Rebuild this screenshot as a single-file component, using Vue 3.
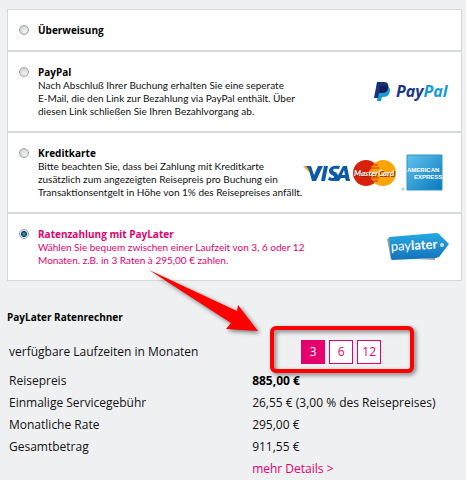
<script setup>
import { ref } from 'vue'

const methods = [
  { id: 'transfer', title: 'Überweisung', lines: [] },
  {
    id: 'paypal',
    title: 'PayPal',
    lines: [
      'Nach Abschluß Ihrer Buchung erhalten Sie eine seperate',
      'E-Mail, die den Link zur Bezahlung via PayPal enthält. Über',
      'diesen Link schließen Sie Ihren Bezahlvorgang ab.'
    ]
  },
  {
    id: 'card',
    title: 'Kreditkarte',
    lines: [
      'Bitte beachten Sie, dass bei Zahlung mit Kreditkarte',
      'zusätzlich zum angezeigten Reisepreis pro Buchung ein',
      'Transaktionsentgelt in Höhe von 1% des Reisepreises anfällt.'
    ]
  },
  {
    id: 'paylater',
    title: 'Ratenzahlung mit PayLater',
    lines: [
      'Wählen Sie bequem zwischen einer Laufzeit von 3, 6 oder 12',
      'Monaten. z.B. in 3 Raten à 295,00 € zahlen.'
    ]
  }
]

const rows = [
  { label: 'Reisepreis', value: '885,00 €', bold: true },
  { label: 'Einmalige Servicegebühr', value: '26,55 € (3,00 % des Reisepreises)' },
  { label: 'Monatliche Rate', value: '295,00 €' },
  { label: 'Gesamtbetrag', value: '911,55 €' }
]

const terms = [3, 6, 12]
const selected = ref('paylater')
const term = ref(3)
</script>

<template>
  <main class="page">
    <div class="methods">
      <label
        v-for="m in methods"
        :key="m.id"
        class="method"
        :class="{ active: selected === m.id }"
      >
        <input v-model="selected" type="radio" name="method" :value="m.id" />
        <span class="text">
          <strong>{{ m.title }}</strong>
          <span v-for="line in m.lines" :key="line" class="line">{{ line }}</span>
        </span>

        <svg v-if="m.id === 'paypal'" class="logo" width="75" height="22" viewBox="0 0 75 22">
          <path d="M5 5h8c3 1 4 4 2 8-1 2-3 3-6 3H8l-1 4H3z" fill="#169bd7" />
          <path d="M3 1h7c4 0 5 3 4 6-1 4-3 5-7 5H5l-1 5H0z" fill="#182f7c" />
          <path d="M6 5h7c1 1 1 2 1 3-1 3-3 4-7 4H5z" fill="#14205a" />
          <text x="22" y="16" class="paypal-word">
            <tspan fill="#1c3687">Pay</tspan><tspan fill="#169bd7">Pal</tspan>
          </text>
        </svg>

        <svg v-if="m.id === 'card'" class="logo cards" width="140" height="38" viewBox="0 0 140 38">
          <path d="M0 12h7l2 4 1 6z" fill="#f2a51d" />
          <path
            d="M3 12h5l3 9 4-9h5l-7 15H9L6 16q-1-2-3-4zM21 12h4l-3 15h-4zM37 12l-1 3q-6-1-6 1c0 2 5 2 5 6 0 5-5 6-10 4l1-3q5 2 5 0c0-2-5-2-5-6 0-5 6-6 11-5zM40 12h4l3 15h-4l-1-3h-4l-2 3h-4zm1 4-2 5h3z"
            fill="#0d5ba6"
          />
          <circle cx="63" cy="19" r="13" fill="#d8200b" />
          <circle cx="80" cy="19" r="13" fill="#fca306" />
          <path d="M67 11h8M67 14h9M67 24h9M67 27h8" stroke="#d8200b" />
          <text x="52" y="23" class="master-shadow">MasterCard</text>
          <text x="51" y="22" class="master">MasterCard</text>
          <defs>
            <linearGradient id="amex" x2="1" y2="1">
              <stop offset="0" stop-color="#62c3ec" />
              <stop offset="1" stop-color="#0879be" />
            </linearGradient>
          </defs>
          <path d="M104 1h35v35h-35z" fill="url(#amex)" stroke="#3395cb" />
          <g class="amex">
            <text x="104" y="18">AMERICAN</text>
            <text x="111" y="25">EXPRESS</text>
          </g>
          <circle cx="100" cy="35" r="1" fill="none" stroke="#85c3e2" />
        </svg>

        <svg v-if="m.id === 'paylater'" class="logo" width="62" height="30" viewBox="0 0 62 30">
          <defs>
            <linearGradient id="tag" x2="0" y2="1">
              <stop offset="0" stop-color="#27a9e3" />
              <stop offset="1" stop-color="#1472bb" />
            </linearGradient>
          </defs>
          <path d="M0 7 4 5v23zM30 27l18-1v2z" fill="#9b9c9e" />
          <path d="M2 5 49 1q2 0 3 1l10 10-10 13-3 1-44 2q-1 0-1-2z" fill="url(#tag)" />
          <circle cx="55" cy="13" r="2" fill="#ded8d6" />
          <g class="tag-word" transform="rotate(-3 4 19)">
            <text x="4" y="19">pay<tspan font-weight="700">later</tspan></text>
          </g>
        </svg>
      </label>
    </div>

    <h2>PayLater Ratenrechner</h2>

    <table>
      <tbody>
        <tr class="term-row">
          <th scope="row">verfügbare Laufzeiten in Monaten</th>
          <td>
            <div class="terms">
              <button
                v-for="t in terms"
                :key="t"
                type="button"
                :class="{ on: term === t }"
                :aria-pressed="term === t"
                @click="term = t"
              >
                {{ t }}
              </button>
              <span class="frame"></span>
              <svg class="arrow" width="120" height="72" viewBox="0 0 120 72">
                <path d="M9 8 97 49 98 43 118 69 86 67 91 61z" fill="#fe0000" />
              </svg>
            </div>
          </td>
        </tr>
        <tr v-for="row in rows" :key="row.label">
          <th scope="row">{{ row.label }}</th>
          <td :class="{ bold: row.bold }">{{ row.value }}</td>
        </tr>
        <tr>
          <th></th>
          <td><a href="#">mehr Details &gt;</a></td>
        </tr>
      </tbody>
    </table>
  </main>
</template>

<style>
body {
  margin: 0;
  background: #eff0f2;
}
</style>

<style scoped>
.page {
  padding: 9px 4px 0 7px;
  font-family: "Open Sans", "Noto Sans", sans-serif;
  color: #111;
}

/* --- PAYMENT METHODS --- */
.methods {
  border: 1px solid #d5d7d8;
  background: white;
}
.method {
  display: flex;
  align-items: center;
  padding: 13px 12px 13px 11px;
  font-family: Lato, sans-serif;
  font-size: 10px;
  line-height: 13px;
  cursor: pointer;
}
.method + .method {
  border-top: 2px solid #d5d7d8;
}
.method input {
  appearance: none;
  flex: none;
  align-self: flex-start;
  width: 10px;
  height: 10px;
  margin: 2px 9px 0 0;
  border: 1px solid #a0a3a6;
  border-radius: 50%;
  background: radial-gradient(circle at 60% 65%, #f4f4f4, #c5c7ca);
}
.method input:checked {
  background: radial-gradient(circle, #2bb3ed 0, #123a5c 45%, #dfe3e6 60%);
}
.text {
  flex: 1;
  white-space: nowrap;
}
.text strong {
  display: block;
  font-family: "Open Sans", "Noto Sans", sans-serif;
  line-height: 14px;
  font-weight: 700;
  color: #000;
}
.line {
  display: block;
}
.active,
.active strong {
  color: #e5006d;
}
.logo {
  flex: none;
}
.cards {
  margin-right: 6px;
}
.paypal-word {
  font: italic 700 16px "Open Sans", sans-serif;
}
.master,
.master-shadow {
  font: italic 700 8px Lato, sans-serif;
  fill: white;
}
.master-shadow {
  fill: #7d2516;
}
.amex {
  font: 700 6px "Liberation Sans", sans-serif;
  fill: white;
}
.tag-word {
  font: 13px Lato, sans-serif;
  fill: white;
}

/* --- CALCULATOR --- */
h2 {
  margin: 28px 0 0;
  font-size: 10px;
  line-height: 16px;
  color: #000;
}
table {
  width: 100%;
  margin-top: 9px;
  border-collapse: collapse;
  table-layout: fixed;
  font-size: 12px;
  line-height: 22px;
}
th,
td {
  padding: 0 0 0 2px;
  text-align: left;
  font-weight: 400;
  white-space: nowrap;
}
th {
  width: 53%;
}
.term-row th,
.term-row td {
  height: 36px;
}
.bold {
  font-weight: 700;
  color: #000;
}
a {
  color: #e5006d;
  text-decoration: none;
}
.terms {
  position: relative;
  display: flex;
  gap: 4px;
  width: max-content;
  margin-left: 49px;
}
button {
  width: 24px;
  height: 24px;
  padding: 0;
  border: 1px solid #e5006d;
  background: white;
  color: #e5006d;
  font: inherit;
  line-height: 22px;
}
button.on {
  background: #e5006d;
  color: white;
}
.frame {
  position: absolute;
  inset: -14px -33px -9px -31px;
  border: 4px solid #fe0000;
  border-radius: 6px;
  filter: drop-shadow(2px 2px 2px rgba(0, 0, 0, 0.5));
  pointer-events: none;
}
.arrow {
  position: absolute;
  right: calc(100% + 41px);
  bottom: 30px;
  filter: drop-shadow(2px 2px 2px rgba(0, 0, 0, 0.5));
  pointer-events: none;
}
</style>
